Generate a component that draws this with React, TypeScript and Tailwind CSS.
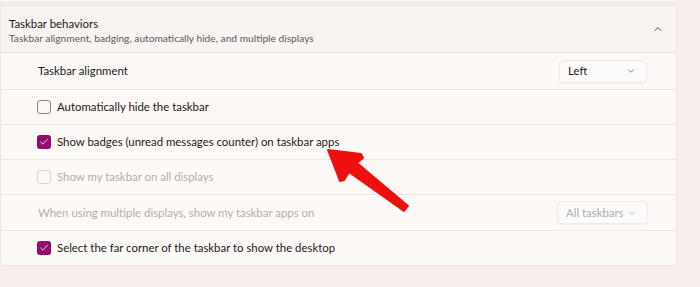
import { ChevronDown, ChevronUp, Check } from 'lucide-react';

function Box({ checked, disabled }: { checked?: boolean; disabled?: boolean }) {
    if (checked) {
        return (
            <span className="w-[14px] h-[14px] rounded-[3px] bg-[#950d6c] flex items-center justify-center shrink-0">
                <Check size={10} strokeWidth={2} className="text-white" />
            </span>
        );
    }
    return (
        <span
            className={`w-[14px] h-[14px] rounded-[3px] border shrink-0 bg-[#fbf8f6] ${
                disabled ? 'border-[#dcd6d4]' : 'border-[#8a8584]'
            }`}
        />
    );
}

function CheckRow({ label, checked, disabled }: { label: string; checked?: boolean; disabled?: boolean }) {
    return (
        <div className="h-[35px] flex items-center gap-[6px] pl-[36px] border-t border-[#ece6e4]">
            <Box checked={checked} disabled={disabled} />
            <span className={`text-[11.4px] whitespace-nowrap ${disabled ? 'text-[#b3aead]' : 'text-[#1c1a1a]'}`}>{label}</span>
        </div>
    );
}

function Select({ value, disabled, w }: { value: string; disabled?: boolean; w: string }) {
    return (
        <div
            className={`${w} h-[23px] rounded-[4px] bg-[#fdfbfa] border border-[#efeae8] shadow-[0_1px_1px_rgba(0,0,0,0.04)] flex items-center justify-between pl-[8px] pr-[10px] text-[11.4px] whitespace-nowrap ${
                disabled ? 'text-[#b0abaa]' : 'text-[#1c1a1a]'
            }`}
        >
            <span>{value}</span>
            <ChevronDown size={10} className={disabled ? 'text-[#b8b3b2]' : 'text-[#6d6867]'} />
        </div>
    );
}

export default function App() {
    return (
        <div
            className="w-[700px] h-[287px] bg-[#f8efed] relative overflow-hidden"
            style={{ fontFamily: 'Lato, "Noto Sans", sans-serif' }}
        >
            <div className="w-[677px]">
                <div className="h-[3px] bg-[#fbf7f5] border-b border-[#ebe4e2]" />
                <div className="mt-[2px] bg-[#fcf9f7] border border-[#ece6e4] rounded-b-[4px] overflow-hidden">
                    <div className="h-[46px] bg-[#f9f3f1] flex items-center justify-between pl-[8px] pr-[12px]">
                        <div className="leading-[15px] pt-[3px]">
                            <div className="text-[11.4px] text-[#1c1a1a]">Taskbar behaviors</div>
                            <div className="text-[10.2px] text-[#5f5a59] whitespace-nowrap">
                                Taskbar alignment, badging, automatically hide, and multiple displays
                            </div>
                        </div>
                        <ChevronUp size={12} className="text-[#4a4544]" />
                    </div>

                    <div className="h-[37px] flex items-center justify-between pl-[37px] pr-[29px] border-t border-[#e6e0de]">
                        <span className="text-[11.4px] text-[#1c1a1a]">Taskbar alignment</span>
                        <Select value="Left" w="w-[88px]" />
                    </div>
                    <CheckRow label="Automatically hide the taskbar" />
                    <CheckRow label="Show badges (unread messages counter) on taskbar apps" checked />
                    <CheckRow label="Show my taskbar on all displays" disabled />
                    <div className="h-[36px] flex items-center justify-between pl-[37px] pr-[28px] border-t border-[#ece6e4]">
                        <span className="text-[11.4px] text-[#b3aead] whitespace-nowrap">
                            When using multiple displays, show my taskbar apps on
                        </span>
                        <Select value="All taskbars" disabled w="w-[91px]" />
                    </div>
                    <CheckRow label="Select the far corner of the taskbar to show the desktop" checked />
                </div>
            </div>

            {/* red annotation arrow */}
            <svg className="absolute left-0 top-0" width="700" height="287" viewBox="0 0 700 287">
                <polygon
                    points="328,150 361,154 363,158 357,163 408,206 404,211 349,172 344,180 340,181"
                    fill="#ee0f0f"
                    stroke="#ee0f0f"
                    strokeWidth="2"
                    strokeLinejoin="round"
                />
            </svg>
        </div>
    );
}
